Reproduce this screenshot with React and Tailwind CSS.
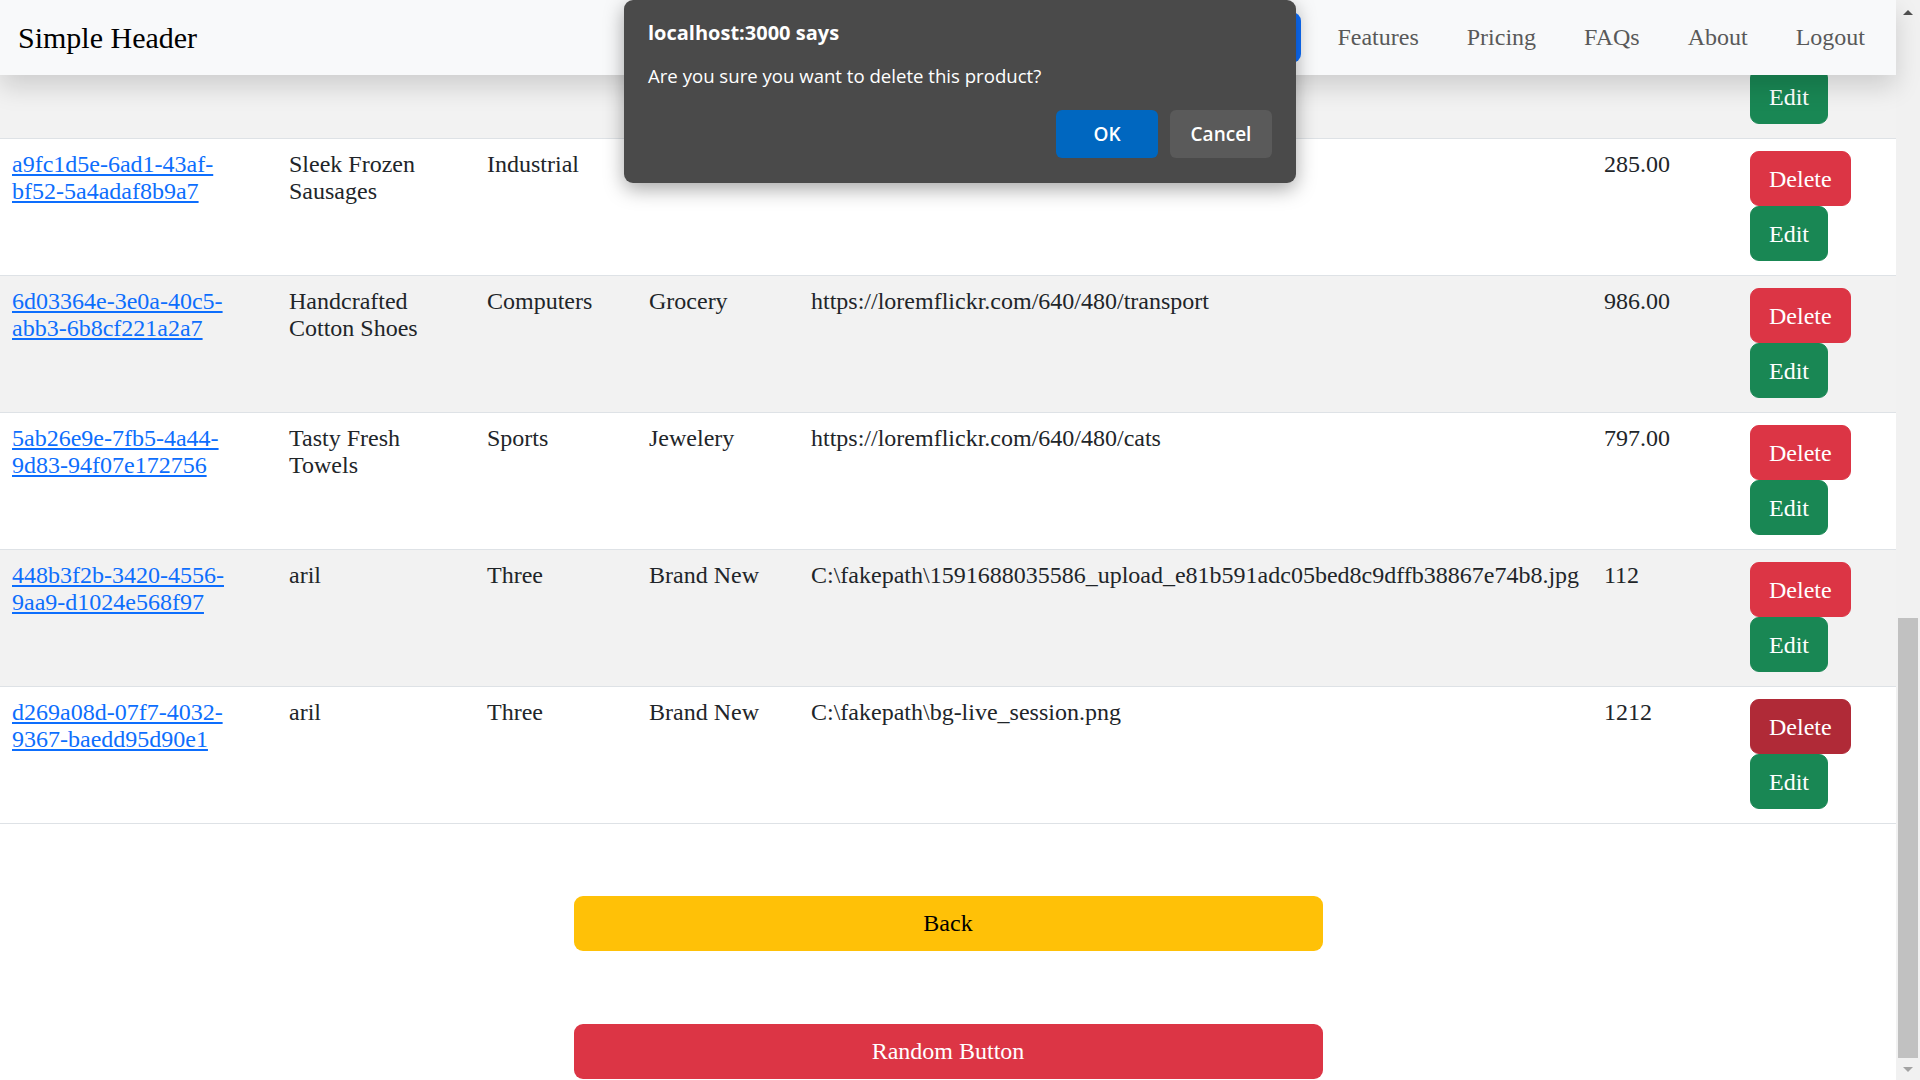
import React from "react";

const rows = [
  { partial: true },
  {
    id: ["a9fc1d5e-6ad1-43af-", "bf52-5a4adaf8b9a7"],
    name: ["Sleek Frozen", "Sausages"],
    category: "Industrial",
    condition: "Toys",
    image: "https://loremflickr.com/640/480/food",
    price: "285.00",
  },
  {
    id: ["6d03364e-3e0a-40c5-", "abb3-6b8cf221a2a7"],
    name: ["Handcrafted", "Cotton Shoes"],
    category: "Computers",
    condition: "Grocery",
    image: "https://loremflickr.com/640/480/transport",
    price: "986.00",
  },
  {
    id: ["5ab26e9e-7fb5-4a44-", "9d83-94f07e172756"],
    name: ["Tasty Fresh", "Towels"],
    category: "Sports",
    condition: "Jewelery",
    image: "https://loremflickr.com/640/480/cats",
    price: "797.00",
  },
  {
    id: ["448b3f2b-3420-4556-", "9aa9-d1024e568f97"],
    name: ["aril"],
    category: "Three",
    condition: "Brand New",
    image: "C:\\fakepath\\1591688035586_upload_e81b591adc05bed8c9dffb38867e74b8.jpg",
    price: "112",
  },
  {
    id: ["d269a08d-07f7-4032-", "9367-baedd95d90e1"],
    name: ["aril"],
    category: "Three",
    condition: "Brand New",
    image: "C:\\fakepath\\bg-live_session.png",
    price: "1212",
    active: true,
  },
];

function Row({ row, index }) {
  const bg = index % 2 === 0 ? "bg-[#f2f2f2]" : "bg-white";
  return (
    <div
      className={`grid grid-cols-[277px_198px_162px_162px_793px_146px_158px] border-b border-[#dee2e6] ${bg}`}
    >
      <div className="px-3 pt-[12px] pb-[14px]">
        {row.id && (
          <a href="#" className="text-[#0d6efd] underline">
            {row.id[0]}
            <br />
            {row.id[1]}
          </a>
        )}
      </div>
      <div className="px-3 pt-[12px] pb-[14px]">
        {row.name &&
          row.name.map((n, i) => (
            <div key={i}>{n}</div>
          ))}
      </div>
      <div className="px-3 pt-[12px] pb-[14px]">{row.category}</div>
      <div className="px-3 pt-[12px] pb-[14px]">{row.condition}</div>
      <div className="px-3 pt-[12px] pb-[14px] whitespace-nowrap">{row.image}</div>
      <div className="px-3 pt-[12px] pb-[14px]">{row.price}</div>
      <div className="px-3 pt-[12px] pb-[14px] flex flex-col items-start">
        {/* the first row's Delete sits under the navbar */}
        {row.partial ? (
          <div className="h-[55px]" />
        ) : (
          <button
            className={`h-[55px] px-[18px] rounded-[9px] border text-white leading-[36px] ${
              row.active
                ? "bg-[#b02a37] border-[#b02a37]"
                : "bg-[#dc3545] border-[#dc3545]"
            }`}
          >
            Delete
          </button>
        )}
        <button className="h-[55px] px-[18px] rounded-[9px] border border-[#198754] bg-[#198754] text-white leading-[36px]">
          Edit
        </button>
      </div>
    </div>
  );
}

export default function App() {
  return (
    <div className="relative flex h-[1080px] w-[1920px] overflow-hidden bg-white font-['Liberation_Serif',serif] text-[24px] leading-[27px] text-[#212529]">
      {/* page body, scrolled to the bottom */}
      <div className="flex w-[1896px] flex-col pt-[2px]">
        {rows.map((row, i) => (
          <Row key={i} row={row} index={i} />
        ))}

        <div className="flex flex-col items-center">
          <button className="mt-[72px] h-[55px] w-[749px] rounded-[9px] bg-[#ffc107] text-black">
            Back
          </button>
          <button className="mt-[73px] h-[55px] w-[749px] rounded-[9px] bg-[#dc3545] text-white">
            Random Button
          </button>
        </div>
      </div>

      {/* scrollbar */}
      <div className="flex w-[24px] flex-col items-center bg-[#f1f1f1]">
        <svg width="12" height="8" viewBox="0 0 12 8" className="mt-[8px]">
          <polygon points="1,7 6,2 11,7" fill="#505050" />
        </svg>
        <div className="flex-1" />
        <div className="h-[440px] w-[20px] bg-[#c1c1c1]" />
        <svg width="12" height="8" viewBox="0 0 12 8" className="mb-[6px] mt-[8px]">
          <polygon points="1,1 6,6 11,1" fill="#a3a3a3" />
        </svg>
      </div>

      {/* fixed navbar */}
      <header className="absolute left-0 top-0 flex h-[75px] w-[1896px] items-center bg-[#f8f9fa] pl-[18px] pr-[31px] shadow-[0_12px_24px_rgba(0,0,0,0.15)]">
        <span className="text-[30px] leading-[36px] text-black">Simple Header</span>
        <div className="flex-1" />
        <div className="h-[51px] w-[120px] rounded-[9px] bg-[#0d6efd]" />
        <nav className="ml-[36px] flex gap-[48px] text-[#595959]">
          <a href="#">Features</a>
          <a href="#">Pricing</a>
          <a href="#">FAQs</a>
          <a href="#">About</a>
          <a href="#">Logout</a>
        </nav>
      </header>

      {/* browser confirm dialog */}
      <div className="absolute left-[624px] top-0 flex h-[183px] w-[672px] flex-col rounded-[9px] bg-[#4a4a4a] px-[24px] pt-[20px] font-['Open_Sans',sans-serif] text-white shadow-[0_6px_20px_rgba(0,0,0,0.35)]">
        <div className="text-[20px] font-bold leading-[26px]">localhost:3000 says</div>
        <div className="mt-[17px] text-[18.6px] leading-[26px]">Are you sure you want to delete this product?</div>
        <div className="mt-[21px] flex justify-end gap-[12px]">
          <button className="h-[48px] w-[102px] rounded-[6px] bg-[#0067c0] text-[19px] font-semibold">OK</button>
          <button className="h-[48px] w-[102px] rounded-[6px] bg-[#5a5a5a] text-[19px] font-semibold">Cancel</button>
        </div>
      </div>
    </div>
  );
}
